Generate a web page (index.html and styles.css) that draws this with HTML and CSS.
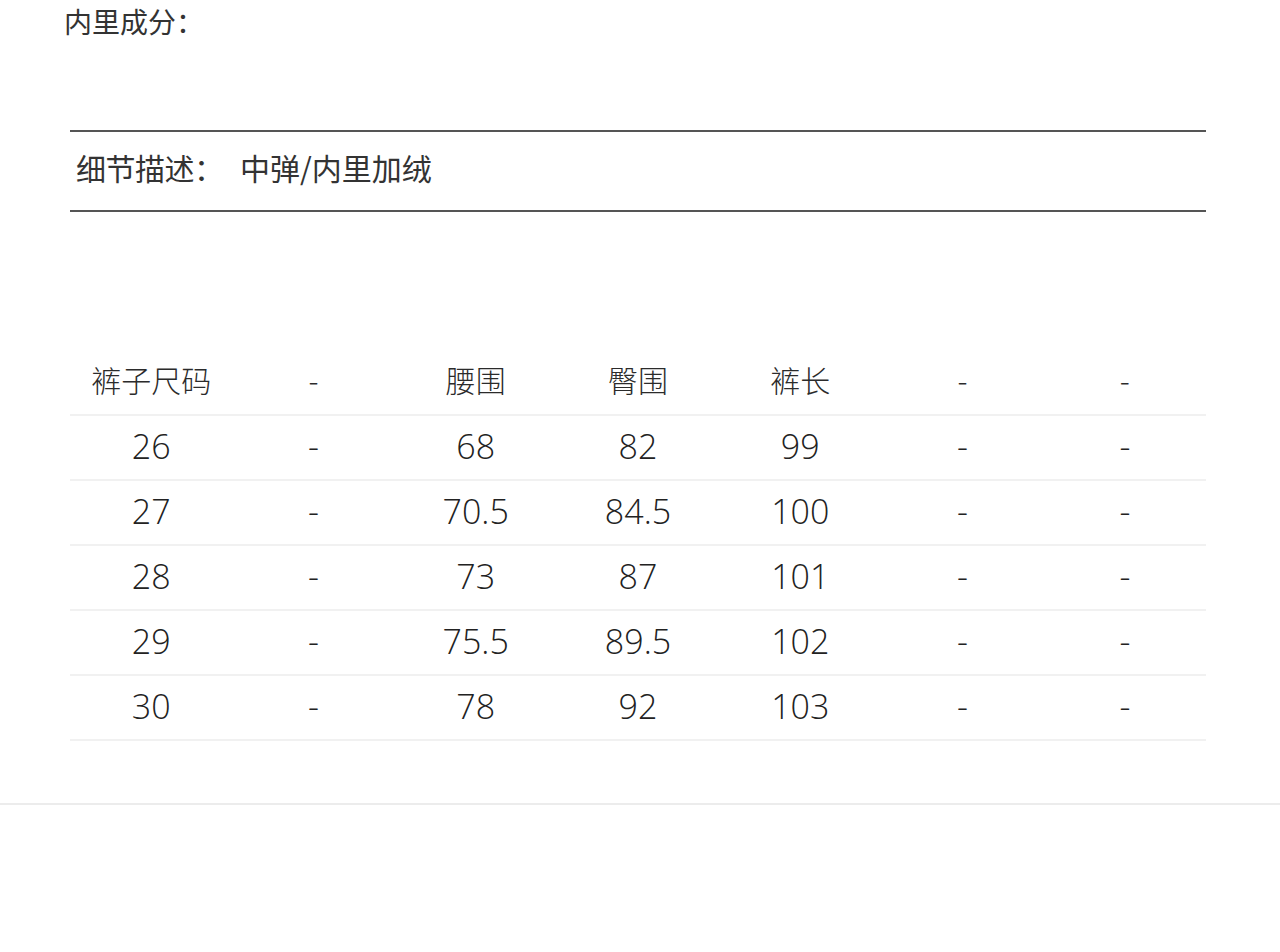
FILE: index.html
```html
<!DOCTYPE html>
<html lang="zh">
<head>
<meta charset="utf-8">
<link rel="stylesheet" href="styles.css">
</head>
<body>
<div class="page">
  <div class="composition">内里成分<span class="colon">：</span></div>
  <div class="detail">
    <span class="detail-label">细节描述<span class="colon">：</span></span>
    <span class="detail-value">中弹/内里加绒</span>
  </div>
  <div class="size-table">
    <div class="row head">
      <div class="cell">裤子尺码</div><div class="cell">-</div><div class="cell">腰围</div><div class="cell">臀围</div><div class="cell">裤长</div><div class="cell">-</div><div class="cell">-</div>
    </div>
    <div class="row">
      <div class="cell">26</div><div class="cell">-</div><div class="cell">68</div><div class="cell">82</div><div class="cell">99</div><div class="cell">-</div><div class="cell">-</div>
    </div>
    <div class="row">
      <div class="cell">27</div><div class="cell">-</div><div class="cell">70.5</div><div class="cell">84.5</div><div class="cell">100</div><div class="cell">-</div><div class="cell">-</div>
    </div>
    <div class="row">
      <div class="cell">28</div><div class="cell">-</div><div class="cell">73</div><div class="cell">87</div><div class="cell">101</div><div class="cell">-</div><div class="cell">-</div>
    </div>
    <div class="row">
      <div class="cell">29</div><div class="cell">-</div><div class="cell">75.5</div><div class="cell">89.5</div><div class="cell">102</div><div class="cell">-</div><div class="cell">-</div>
    </div>
    <div class="row">
      <div class="cell">30</div><div class="cell">-</div><div class="cell">78</div><div class="cell">92</div><div class="cell">103</div><div class="cell">-</div><div class="cell">-</div>
    </div>
  </div>
  <div class="bottom-rule"></div>
</div>
</body>
</html>
```

FILE: styles.css
```css
html, body {
  margin: 0;
  padding: 0;
  background: #ffffff;
}

body {
  font-family: "Noto Sans CJK SC", "Noto Sans", sans-serif;
  color: #2b2b2b;
}

.page {
  width: 1280px;
}

.colon {
  font-family: "Noto Sans CJK TC", sans-serif;
}

.composition {
  padding-left: 64px;
  font-size: 28px;
  line-height: 42px;
  color: #333333;
}

.detail {
  margin: 88px 74px 0 70px;
  border-top: 2px solid #555555;
  border-bottom: 2px solid #555555;
  display: flex;
  align-items: center;
  padding-left: 6px;
  padding-bottom: 8px;
  height: 70px;
  font-size: 30px;
  color: #333333;
}

.detail-label {
  width: 164px;
  letter-spacing: -0.5px;
}

.size-table {
  margin: 139px 74px 0 70px;
}

.row {
  display: grid;
  grid-template-columns: repeat(7, 1fr);
  height: 63px;
  border-bottom: 2px solid #f1f1f1;
  align-items: center;
}

.row.head {
  margin-top: 1px;
}

.cell {
  text-align: center;
  font-family: "Open Sans", "Noto Sans CJK SC", sans-serif;
  font-size: 34px;
  font-weight: 300;
  line-height: 1;
  padding-bottom: 3px;
  color: #222222;
}

.row.head .cell {
  font-family: "Noto Sans CJK SC", sans-serif;
  font-size: 30px;
  padding-bottom: 7px;
  color: #2b2b2b;
}

.bottom-rule {
  margin-top: 62px;
  height: 2px;
  background: #ececec;
}
```
